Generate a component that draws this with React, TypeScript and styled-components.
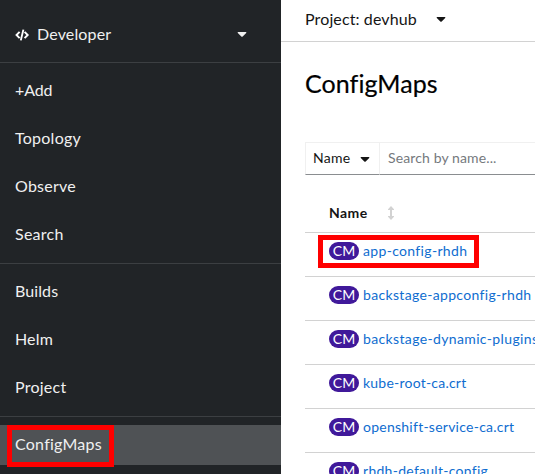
import React from "react";
import styled, { createGlobalStyle } from "styled-components";

const GlobalStyle = createGlobalStyle`
  * { box-sizing: border-box; }
  body {
    margin: 0;
    overflow: hidden;
    background: #fff;
    color: #151515;
    font-family: Lato, "Open Sans", sans-serif;
  }
`;

const Layout = styled.div`
  display: grid;
  grid-template-columns: 281px 1fr;
  width: 100vw;
  height: 100vh;
  overflow: hidden;
`;

const Sidebar = styled.nav`
  background: #212427;
  color: #f0f0f0;
  font-size: 16px;
  overflow: hidden;
`;

const Perspective = styled.div`
  display: flex;
  align-items: center;
  height: 62px;
  padding: 7px 34px 0 15px;
  letter-spacing: 0.15px;
`;

const PerspectiveName = styled.span`
  flex: 1;
  margin: -2px 0 0 7px;
`;

const NavSection = styled.div`
  display: flex;
  flex-direction: column;
  gap: 8px;
  padding: 8px 0;
  border-top: 1px solid #3c3f42;
`;

const NavItem = styled.div<{ $active?: boolean; $spacing?: number }>`
  position: relative;
  display: flex;
  align-items: center;
  height: 40px;
  padding: 0 15px 3px;
  background: ${(p) => (p.$active ? "#4f5255" : "transparent")};
  letter-spacing: ${(p) => p.$spacing ?? 0.25}px;
`;

const Highlight = styled.span<{ $x: number; $y: number; $w: number; $h: number }>`
  position: absolute;
  left: ${(p) => p.$x}px;
  top: ${(p) => p.$y}px;
  width: ${(p) => p.$w}px;
  height: ${(p) => p.$h}px;
  border: 5px solid #f00;
  z-index: 1;
`;

const Main = styled.main`
  min-width: 0;
  overflow: hidden;
`;

const ProjectBar = styled.div`
  display: flex;
  align-items: center;
  gap: 19px;
  height: 42px;
  padding: 0 24px 4px;
  border-bottom: 1px solid #d2d2d2;
  font-size: 16px;
  letter-spacing: 0.12px;

  svg {
    margin-top: 1px;
  }
`;

const Title = styled.h1`
  height: 100px;
  margin: 0;
  padding: 25px 24px 0;
  color: #000;
  font-size: 25px;
  font-weight: 400;
  line-height: 32px;
  letter-spacing: 0.08px;
  -webkit-text-stroke: 0.2px #000;
`;

const Content = styled.div`
  margin-left: 24px;
`;

const Toolbar = styled.div`
  display: flex;
  height: 33px;
  font-size: 14px;
`;

const Filter = styled.div`
  display: flex;
  align-items: center;
  justify-content: space-between;
  width: 75px;
  padding: 0 9px 2px 7px;
  border: 1px solid #f0f0f0;
  border-bottom-color: #8a8d90;
  letter-spacing: 0.3px;

  svg {
    margin-top: 3px;
  }
`;

const SearchField = styled.div`
  display: flex;
  flex: 1;
  align-items: center;
  padding: 0 0 2px 8px;
  border: 1px solid #f0f0f0;
  border-width: 1px 0 1px;
  border-bottom-color: #8a8d90;
  color: #75797d;
  letter-spacing: 0.12px;
`;

const TableHead = styled.div`
  display: flex;
  align-items: center;
  gap: 20px;
  height: 58px;
  padding: 18px 0 0 24px;
  border-bottom: 1px solid #d2d2d2;
  font-size: 14px;
  font-weight: 700;
  letter-spacing: 0.4px;
`;

const Row = styled.div`
  position: relative;
  display: flex;
  align-items: flex-start;
  gap: 4px;
  height: 44px;
  padding: 9px 0 0 24px;
  border-bottom: 1px solid #d2d2d2;
  font-size: 14px;
  line-height: 18px;
  white-space: nowrap;
`;

const Badge = styled.span`
  flex: none;
  width: 30px;
  height: 18px;
  border-radius: 9px;
  background: #40199a;
  color: #fff;
  text-align: center;
`;

const ResourceLink = styled.a<{ $spacing: number }>`
  color: #0f6dd0;
  letter-spacing: ${(p) => p.$spacing}px;
`;

const Caret = ({ size = 10 }: { size?: number }) => (
  <svg width={size} height={size / 2} viewBox="0 0 10 5">
    <path d="M1.1 0h7.8q.8.1.3.9L5.7 4.5q-.7.6-1.4 0L.8.9Q.3.1 1.1 0z" fill="currentColor" />
  </svg>
);

const CodeIcon = () => (
  <svg width="15" height="12" viewBox="0 0 15 12" fill="none" stroke="#fff" strokeWidth="1.9">
    <path d="M4.6 2.8 1.5 6l3.1 3.2M9.6 2.8 12.7 6l-3.1 3.2M8.4.6 5.8 11.4" />
  </svg>
);

const SortIcon = () => (
  <svg width="6" height="14" viewBox="0 0 6 14" fill="#d2d2d2">
    <path d="M3 0 6 3.2V4H4v6h2v.8L3 14 0 10.8V10h2V4H0v-.8z" />
  </svg>
);

const navSections: { label: string; spacing?: number; active?: boolean }[][] = [
  [{ label: "+Add", spacing: -0.1 }, { label: "Topology" }, { label: "Observe" }, { label: "Search" }],
  [{ label: "Builds", spacing: 0.1 }, { label: "Helm", spacing: 0.15 }, { label: "Project" }],
  [{ label: "ConfigMaps", active: true }],
];

const configMaps = [
  { name: "app-config-rhdh", spacing: 0.33, highlighted: true },
  { name: "backstage-appconfig-rhdh", spacing: 0.33 },
  { name: "backstage-dynamic-plugins-rhdh", spacing: 0.36 },
  { name: "kube-root-ca.crt", spacing: 0.22 },
  { name: "openshift-service-ca.crt", spacing: 0.25 },
  { name: "rhdh-default-config", spacing: 0.28 },
];

export default function App() {
  return (
    <Layout>
      <GlobalStyle />
      <Sidebar>
        <Perspective>
          <CodeIcon />
          <PerspectiveName>Developer</PerspectiveName>
          <Caret />
        </Perspective>
        {navSections.map((items, i) => (
          <NavSection key={i}>
            {items.map((item) => (
              <NavItem key={item.label} $active={item.active} $spacing={item.spacing}>
                {item.label}
                {item.active && <Highlight $x={6.5} $y={0} $w={107} $h={42} />}
              </NavItem>
            ))}
          </NavSection>
        ))}
      </Sidebar>
      <Main>
        <ProjectBar>
          Project: devhub
          <Caret />
        </ProjectBar>
        <Title>ConfigMaps</Title>
        <Content>
          <Toolbar>
            <Filter>
              Name
              <Caret />
            </Filter>
            <SearchField>Search by name...</SearchField>
          </Toolbar>
          <TableHead>
            Name
            <SortIcon />
          </TableHead>
          {configMaps.map((cm) => (
            <Row key={cm.name}>
              <Badge>CM</Badge>
              <ResourceLink $spacing={cm.spacing}>{cm.name}</ResourceLink>
              {cm.highlighted && <Highlight $x={12.5} $y={2} $w={161} $h={33} />}
            </Row>
          ))}
        </Content>
      </Main>
    </Layout>
  );
}
